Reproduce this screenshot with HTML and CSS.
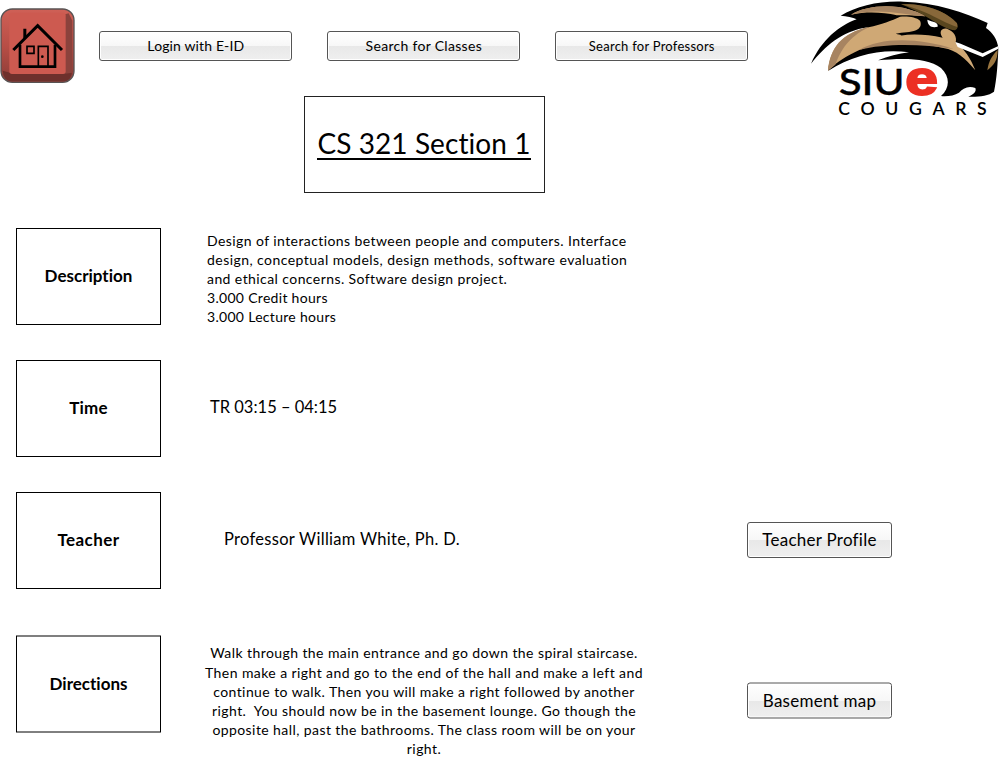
FILE: index.html
```html
<!DOCTYPE html>
<html lang="en"><head><meta charset="utf-8"><title>CS 321 Section 1</title><link rel="stylesheet" href="styles.css"></head>
<body>
<header class="top">
<svg class="home" viewBox="0 0 228 252" role="img" aria-label="Home">
<defs><linearGradient id="h" x1="0" y1="0" x2="0" y2="1"><stop offset="0" stop-color="#cf6056"/><stop offset=".5" stop-color="#b84e46"/><stop offset="1" stop-color="#8a3b36"/></linearGradient></defs>
<rect x="3" y="27" width="219" height="220" rx="34" fill="url(#h)"/>
<path d="M8 212 L30 218 L197 218 L217 212 Q214 244 190 244 H38 Q10 244 8 212Z" fill="#6e302c"/>
<path d="M190 44 L206 40 L217 62 V218 L190 222Z" fill="#8b423c"/>
<rect x="28" y="38" width="169" height="184" rx="8" fill="#cd5a50"/>
<rect x="3" y="27" width="219" height="220" rx="34" fill="none" stroke="#585353" stroke-width="4"/>
<path d="M40 150 L113 77 L186 150" fill="none" stroke="#000" stroke-width="9"/>
<path d="M70 116 V86 H79 V108" fill="#000"/>
<path d="M60 134 V200 H165 V134" fill="none" stroke="#000" stroke-width="8"/>
<path d="M81 139 H102 V160 H81Z M115 200 V139 H144 V200" fill="none" stroke="#000" stroke-width="5"/>
<circle cx="127" cy="170" r="4"/>
</svg>
<nav class="nav"><button class="btn login">Login with E-ID</button><button class="btn classes">Search for Classes</button><button class="btn profs">Search for Professors</button></nav>
<svg class="logo" viewBox="0 0 600 375" role="img" aria-label="SIUE Cougars">
<path d="M33 191 C65 120 115 78 170 58 C158 52 140 49 122 47 C170 18 240 2 310 5 C410 8 490 36 563 69 L558 84 C578 97 591 118 595 142 C594 185 590 240 582 275 C565 288 535 291 505 290 C522 283 530 274 526 264 C505 256 488 265 477 278 C463 287 440 290 423 288 C450 265 451 230 423 204 C385 174 310 173 234 181 C265 169 295 161 327 157 C245 145 160 165 85 212 C90 155 120 105 205 82 C125 92 75 140 33 191Z" fill="#000"/>
<path d="M84 212 C90 145 125 98 206 82 C245 73 275 62 300 50 C325 48 350 52 360 62 C366 75 360 85 348 91 C331 98 310 97 287 101 C302 105 310 105 300 107 C340 100 385 104 428 113 C415 95 425 83 441 86 C462 94 472 111 467 127 C493 147 512 175 526 211 C495 174 470 151 430 144 C335 120 240 124 178 150 C140 168 111 185 84 212Z" fill="#cfa875"/>
<path d="M153 44 C195 18 270 11 330 29 C355 36 374 45 376 49 C340 46 310 46 290 46 C250 37 200 34 153 44Z" fill="#cfa875"/>
<path d="M84 212 C90 145 125 98 206 82 C145 112 124 148 106 194Z M153 44 C195 18 270 11 330 29 C355 36 374 45 376 49 C310 44 235 22 153 44Z M178 150 C240 112 355 112 460 147 C365 132 255 130 178 150Z" fill="#a78461"/>
<path d="M303 13 C380 10 440 35 471 70 Q478 84 465 91 C425 88 386 45 303 13Z" fill="#59461f"/>
<path d="M303 13 C380 10 440 35 471 70 L472 81 C422 66 386 33 303 13Z" fill="#88683a"/>
<path d="M382 59 C398 66 415 65 413 80 C395 85 383 77 382 59Z M466 126 L482 131 L548 160 L597 137 L595 146 L548 171 L473 141Z" fill="#fff"/>
<path d="M562 211 C566 183 576 167 593 150 C593 180 582 195 562 211Z" fill="#9a7640"/>
<text class="siu" x="116" y="285" textLength="198" lengthAdjust="spacingAndGlyphs">SIU</text>
<text class="red-e" x="316" y="284" textLength="98" lengthAdjust="spacingAndGlyphs">e</text>
<text class="cougars" x="115" y="344" textLength="445">COUGARS</text>
</svg>
</header>
<main>
<h1 class="title"><span>CS 321 Section 1</span></h1>
<section class="row description"><h2 class="label">Description</h2><p class="body"><span class="d1">Design of interactions between people and computers. Interface</span><span class="d2">design, conceptual models, design methods, software evaluation</span><span class="d3">and ethical concerns. Software design project.</span><span class="d4">3.000 Credit hours</span><span class="d5">3.000 Lecture hours</span></p></section>
<section class="row time"><h2 class="label">Time</h2><p class="body"><span>TR 03:15 – 04:15</span></p></section>
<section class="row teacher"><h2 class="label">Teacher</h2><p class="body"><span>Professor William White, Ph. D.</span></p><button class="btn side">Teacher Profile</button></section>
<section class="row directions"><h2 class="label">Directions</h2><p class="body"><span>Walk through the main entrance and go down the spiral staircase.</span><span>Then make a right and go to the end of the hall and make a left and</span><span>continue to walk. Then you will make a right followed by another</span><span>right.&nbsp; You should now be in the basement lounge. Go though the</span><span>opposite hall, past the bathrooms. The class room will be on your</span><span>right.</span></p><button class="btn side">Basement map</button></section>
</main>
</body></html>
```
FILE: styles.css
```css
* { box-sizing: border-box; }
body { margin: 0; width: 1000px; height: 767px; overflow: hidden; background: #fff; color: #000; font-family: Lato, "Liberation Sans", sans-serif; font-variant-ligatures: none; }
.top { display: flex; height: 96px; }
.home { width: 76px; height: 84px; flex: none; }
.nav { display: flex; gap: 35px; padding: 31px 0 0 23.5px; width: 724px; flex: none; }
.btn { font-family: inherit; color: #000; padding: 0; border: 1px solid #555; border-radius: 3px; box-shadow: inset 0 0 0 1px #fff; background: linear-gradient(#fff 0%, #f7f7f7 50%, #e8e8e8 51%, #efefef 100%); white-space: nowrap; }
.nav .btn { width: 193px; height: 30px; margin-left: -.2px; margin-right: .2px; font-size: 14px; flex: none; letter-spacing: .13px; padding-bottom: 2px; }
.nav .classes { letter-spacing: .3px; }
.nav .profs { font-size: 13px; letter-spacing: .25px; padding-bottom: 0; }
.logo { width: 200px; height: 125px; flex: none; }
.siu { font: 500 112px Lato, sans-serif; stroke: #000; stroke-width: 1px; }
.red-e { font: bold 146px "Liberation Sans", sans-serif; fill: #ec3024; stroke: #ec3024; stroke-width: 6px; }
.cougars { font: 600 53px Lato, sans-serif; }
.title { width: 241px; height: 97px; margin: 0 0 35px 303.5px; border: 1px solid #222; display: flex; align-items: center; justify-content: center; font-size: 28px; font-weight: 400; white-space: nowrap; letter-spacing: .08px; padding-bottom: 2px; }
.title span { border-bottom: 2px solid #000; line-height: 30px; }
.row { display: grid; grid-template: 97px / 145px 448px 1fr; column-gap: 40px; margin: 0 0 35px 16px; align-items: center; }
.teacher { margin-bottom: 46.5px; }
.directions { margin-bottom: 0; transform: translateY(-.5px); }
.label { margin: 0; height: 97px; border: 1px solid #000; display: flex; align-items: center; justify-content: center; font-size: 17px; font-weight: 700; padding-bottom: 2px; }
.time .label { letter-spacing: .2px; }
.teacher .label { letter-spacing: .4px; }
.body { margin: 0; font-size: 14px; line-height: 19.2px; white-space: nowrap; letter-spacing: .42px; }
.body span { display: block; }
.description .body { padding: 4px 0 0 6px; }
.d2 { letter-spacing: .45px; }
.d4, .d5 { letter-spacing: .3px; }
.time .body, .teacher .body { font-size: 16.5px; letter-spacing: 0; padding-bottom: 2px; }
.time .body { padding-left: 9px; }
.teacher .body { padding-left: 23px; letter-spacing: .3px; }
.directions .body { width: 446px; text-align: center; padding-top: 34px; }
.side { width: 145px; height: 36px; margin: -2px 0 0 58px; font-size: 17px; letter-spacing: .25px; padding-bottom: 1px; }
.directions .side { margin-top: 34px; }
```
